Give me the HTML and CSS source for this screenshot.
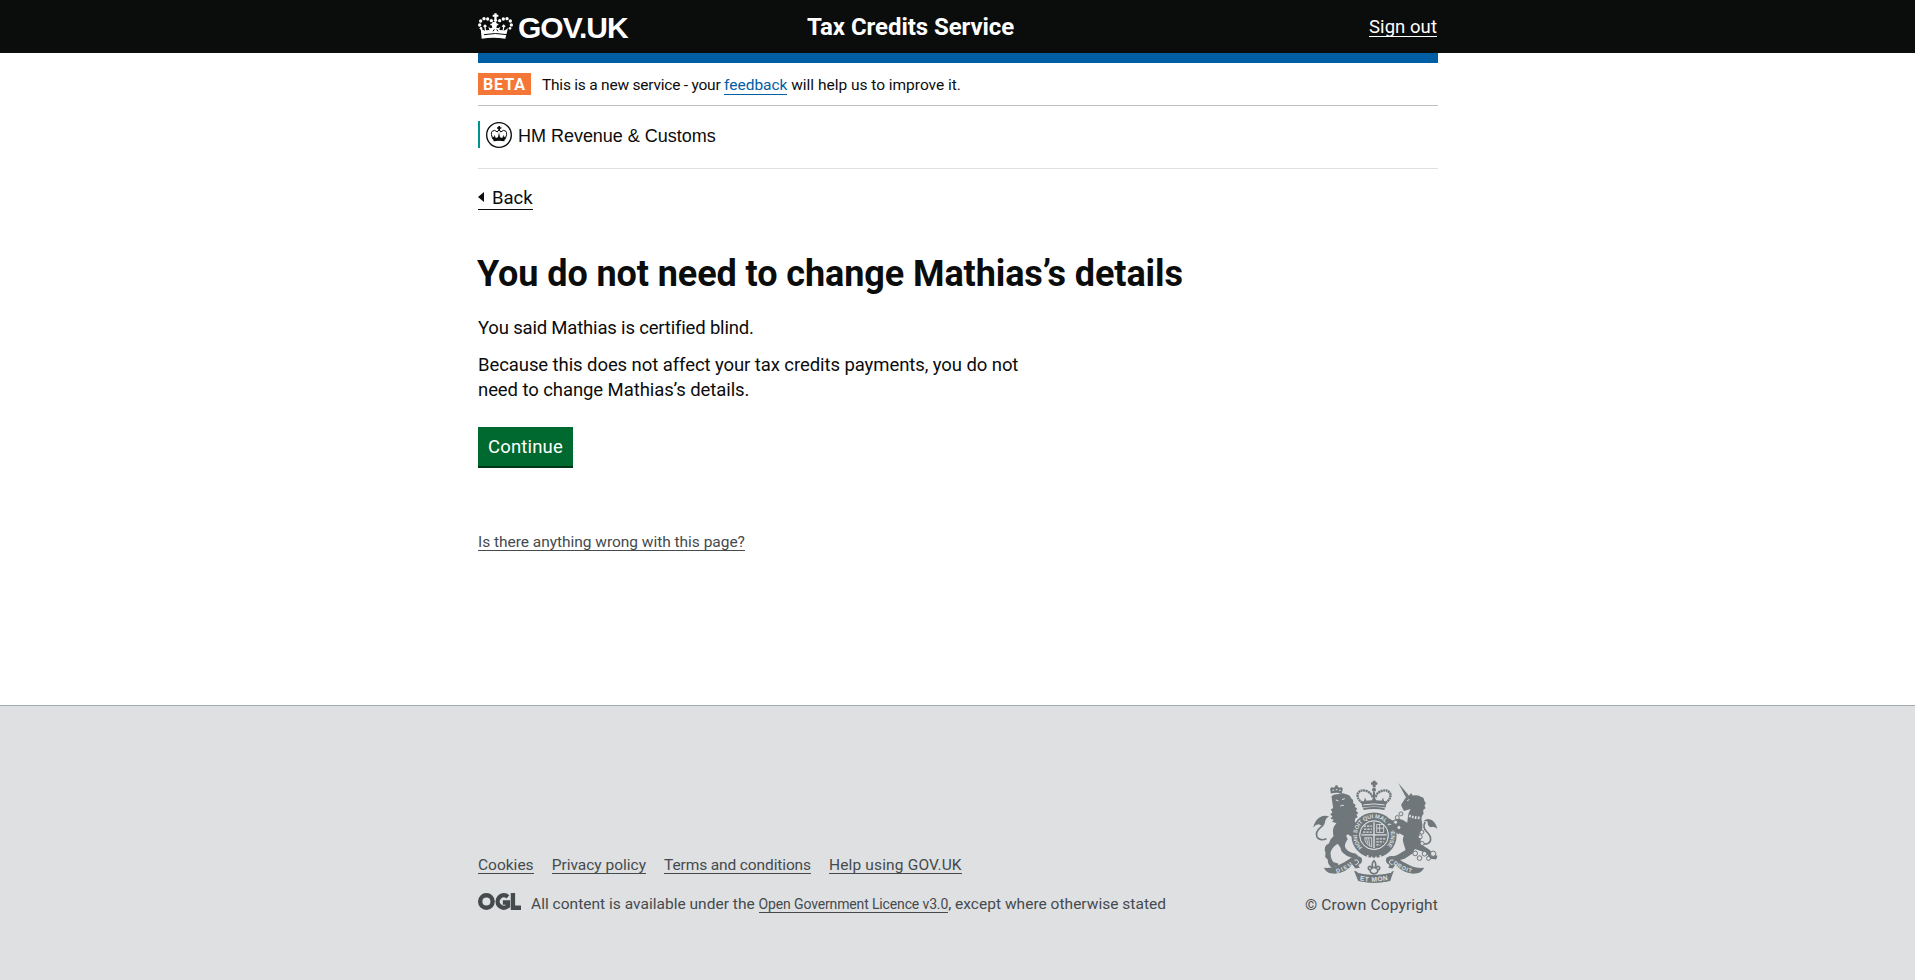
FILE: index.html
```
<!DOCTYPE html>
<html lang="en">
<head>
<meta charset="utf-8">
<title>You do not need to change Mathias’s details</title>
<link rel="stylesheet" href="styles.css">
</head>
<body>
<header class="header">
  <div class="wrap header-row">
    <a class="brand" href="#">
      <svg class="crown" viewBox="24 38 105 78" fill="#fff">
        <path d="M73 39h7v4h5v6h-5v7h-7v-7h-5v-6h5z"/>
        <circle cx="76.500" cy="60" r="5"/>
        <circle cx="64" cy="61" r="5"/><circle cx="53" cy="56" r="5"/><circle cx="42" cy="55" r="5"/><circle cx="32" cy="62" r="5"/><circle cx="29" cy="74" r="5"/><circle cx="33" cy="84" r="4"/>
        <circle cx="89" cy="61" r="5"/><circle cx="100" cy="56" r="5"/><circle cx="111" cy="55" r="5"/><circle cx="121" cy="62" r="5"/><circle cx="124" cy="74" r="5"/><circle cx="120" cy="84" r="4"/>
        <path d="M32 83q6 7 13 8l-2-10-4-3 6-6 6 6-4 3 1 9 10-1-3-10 6 5 6-2-2-7h-4v-5h4l3-5h10l3 5h4v5h-4l-2 7 6 2 6-5-3 10 10 1 1-9-4-3 6-6 6 6-4 3-2 10q7-1 13-8l-8 32q-36-6-71 0z"/>
        <path d="M42 103q34-7 69 0" fill="none" stroke="#0b0c0c" stroke-width="3"/>
        <path d="M69 93l4-6M84 93l-4-6" stroke="#0b0c0c" stroke-width="3"/>
      </svg>
      <span class="brand-name">GOV.UK</span>
    </a>
    <span class="service">Tax Credits Service</span>
    <a class="signout" href="#">Sign out</a>
  </div>
</header>
<div class="wrap blue-bar"></div>
<div class="wrap phase">
  <strong class="tag">BETA</strong>
  <span class="phase-text"><span class="phase-lead">This is a new service - your </span><a href="#">feedback</a> will help us to improve it.</span>
</div>
<div class="wrap org">
  <div class="org-logo">
    <svg class="org-crest" viewBox="48 66 78 78" fill="#0b0c0c">
      <circle cx="87" cy="105" r="37" fill="none" stroke="#0b0c0c" stroke-width="4"/>
      <path d="M85 78h5v4h4v4h-4v6h-5v-6h-4v-4h4z"/>
      <path d="M69 118q-8-17-3-24 8-7 16 2 1-5 5-5t5 5q8-9 16-2 5 7-3 24" fill="none" stroke="#0b0c0c" stroke-width="3"/>
      <path d="M67 108l5 4 2-8 3 10 7-2 3-15 3 15 7 2 3-10 2 8 5-4-4 16q-16-3-32 0z"/>
    </svg>
    <span class="org-name">HM Revenue &amp; Customs</span>
  </div>
</div>
<main class="wrap main">
  <a class="back" href="#"><svg class="back-arrow" viewBox="0 0 6 10"><path d="M6 0v10L0 5z" fill="#0b0c0c"/></svg><span class="back-text">Back</span></a>
  <h1 class="title">You do not need to change Mathias’s details</h1>
  <p class="text text-tight">You said Mathias is certified blind.</p>
  <p class="text">Because this does not affect your tax credits payments, you do not<br>need to change Mathias’s details.</p>
  <button class="button">Continue</button>
  <div><a class="report" href="#">Is there anything wrong with this page?</a></div>
</main>
<footer class="footer">
  <div class="wrap footer-row">
    <div>
      <nav class="footer-links">
        <a href="#">Cookies</a><a href="#">Privacy policy</a><a class="link-tight" href="#">Terms and conditions</a><a class="link-wide" href="#">Help using GOV.UK</a>
      </nav>
      <div class="licence">
        <svg class="ogl" viewBox="0 0 128 50" fill="none" stroke="#454a4d" stroke-width="13"><circle cx="25" cy="25" r="18.500"/><path d="M89 11A18.500 18.500 0 1 0 89 39V28H74M104 0V43.500H128"/></svg>
        <span class="licence-text">All content is available under the <a href="#">Open Government Licence v3.0</a>, except where otherwise stated</span>
      </div>
    </div>
    <div class="copyright">
      <svg class="arms" viewBox="69 45 375 310" fill="#6f777b">
        <g>
          <path d="M248 47h9v5h5v7h-5v8h-9v-8h-5v-7h5z"/><circle cx="252" cy="74" r="6"/>
          <path d="M217 114q-18-14-14-28 8-14 26-8 14 5 18 17h10q4-12 18-17 18-6 26 8 4 14-14 28" fill="none" stroke="#6f777b" stroke-width="7" stroke-dasharray="6 1.500"/>
          <path d="M249 80h6v22h-6zM220 114l5-16 6 15zM273 113l6-15 5 16zM242 112l10-18 10 18z"/>
          <path d="M214 110q38-8 76 0l-3 18q-35-7-70 0z"/>
          <path d="M220 120q32-6 64 0" fill="none" stroke="#dee0e2" stroke-width="3"/>
          <path d="M220 129q32-6 64 0v6q-32-6-64 0z"/>
        </g>
        <path d="M122 86l-2-15q4-7 10-3l5-3 1-4h6l1 4 5 3q7-4 10 3l-3 15q-16-5-33 0z"/>
        <path d="M127 76h5M137 74h5M147 76h5" fill="none" stroke="#dee0e2" stroke-width="3"/>
        <path d="M124 94q8-8 18-6 14-6 26 0 12 2 15 12 8 4 6 14l8 6-3 5 8 7-5 4 8 9-6 4 4 8-7 3q-6 16 8 24l-7 4 6 7-10 2q-14 4-25 16l5 10q-14 18-5 30 10 12 28 13l9 8-10 8-12-4q-30-9-32-29l-8-12q-20 12-22 29 0 14 8 26l15 4 1 7-20 6q-13-9-12-24l-8-8 1-13q-8-20 10-28 3-14 14-22-6-25 9-39l-13-4 5-6-10-3 6-8-7-5 7-7-5-8 7-5z"/>
        <path d="M170 190q17-2 26 10l12-2-3 12 4 10-14-3q-16-2-24-12z"/>
        <path d="M150 124q5-5 11-2M137 105l8 3M156 104l8-3" stroke="#dee0e2" stroke-width="3" fill="none"/>
        <path d="M109 222q-22 8-29-7-5-14 12-28 13-10 8-23" fill="none" stroke="#6f777b" stroke-width="5"/>
        <path d="M69 188q5-22 20-31 14-7 28-2-10 4-12 15-7 17-19 8-9 0-17 10z"/>
        <circle cx="252" cy="211" r="56" fill="none" stroke="#6f777b" stroke-width="24"/>
        <circle cx="252" cy="211" r="42"/>
        <circle cx="252" cy="211" r="43" fill="none" stroke="#dee0e2" stroke-width="2.500"/>
        <path id="garter" d="M217 248A51 51 0 1 1 287 248" fill="none"/>
        <text class="motto garter-text"><textPath href="#garter" textLength="236">HONI SOIT QUI MAL Y PENSE</textPath></text>
        <path d="M252 172v78M214 210h76" stroke="#dee0e2" stroke-width="4"/>
        <path d="M221 184h25M222 193h24M219 202h26M259 222h27M259 231h22M259 240h12" stroke="#dee0e2" stroke-width="4" stroke-dasharray="7 3"/>
        <path d="M260 179h21v24h-21zM269 179v22M260 190h21M224 219q0 20 21 27v-27zM229 219l5 18M236 219l3 24" stroke="#dee0e2" stroke-width="2.500" fill="none"/>
        <circle cx="233" cy="274" r="3" fill="#dee0e2"/><circle cx="245" cy="278" r="3" fill="#dee0e2"/><circle cx="258" cy="278" r="3" fill="#dee0e2"/><circle cx="271" cy="274" r="3" fill="#dee0e2"/>
        <path d="M325 54l32 38-9 5z"/>
        <path d="M334 122q-1-5 4-9l8-13q3-6 12-8l6-8 4 8q18-4 26 4 9 1 9 11l5 8-4 6 3 9-7 5 1 12q-9 8-5 23 6 23-8 39 8 12 3 28l28 18 12 14 12 4-4 11-17-2-14-18-33-11-7 13-24 16-23 6-16 10-8-7 8-14 17-6 25-15-5-17q-6-16 0-26l-25-14-14-22-13-3-4-9 12-3 10 5 16-6q16 2 28 13l3-27 7-15-20 6z"/>
        <path d="M352 107l6-3" stroke="#dee0e2" stroke-width="3" fill="none"/>
        <path d="M342 144q21 15 49 15" stroke="#dee0e2" stroke-width="8" stroke-dasharray="5 4" fill="none"/>
        <path d="M311 176l-9 10-11-3 3 12 17 2 15 12 8-13z"/>
        <path d="M390 235q28 8 32-8 3-13-12-27-13-13-4-29" fill="none" stroke="#6f777b" stroke-width="5"/>
        <path d="M400 171q6-10 19-8 17 4 24 29-11-9-21-5-10-5-8-15-5-6-14-1z"/>
        <g fill="#dee0e2" stroke="#6f777b" stroke-width="3"><circle cx="333" cy="147" r="6"/><circle cx="322" cy="158" r="6"/><circle cx="317" cy="172" r="6"/><circle cx="327" cy="188" r="6"/><circle cx="396" cy="202" r="6"/><circle cx="391" cy="216" r="6"/><circle cx="397" cy="236" r="6"/><circle cx="376" cy="266" r="7"/><circle cx="389" cy="280" r="7"/><circle cx="404" cy="267" r="7"/><circle cx="416" cy="281" r="6"/><circle cx="430" cy="267" r="8"/></g>
        <path d="M101 309q20 2 36-4 26-10 50-28 16-8 28 3 5 15-10 21l4 8-13 2-9-12q-19 25-53 28l-12-1q-14-3-21-17zM403 309q-20 2-36-4-26-10-50-28-16-8-28 3-5 15 10 21l-4 8 13 2 9-12q19 25 53 28l12-1q14-3 21-17z"/>
        <path d="M193 286q11-3 13 6-2 7-10 8M311 286q-11-3-13 6 2 7 10 8" fill="none" stroke="#dee0e2" stroke-width="3"/>
        <path d="M192 318q12 2 12 8 48 12 98 0 2-6 10-8-6 14-11 30-48 13-97 0z"/>
        <path d="M203 325q48 12 99 0l-2 24q-48 10-95 0z"/>
        <path d="M252 288q-9 9-3 21l-4 2q-5-11-10-3-1 7 6 7-3 9 11 13 14-4 11-13 7 0 6-7-5-8-10 3l-4-2q6-12-3-21z" fill="#dee0e2" stroke="#6f777b" stroke-width="5"/>
        <path id="dieu" d="M140 325Q168 317 191 297" fill="none"/><path id="droit" d="M309 297Q337 319 370 325" fill="none"/><path id="mon" d="M209 347Q252 356 297 345" fill="none"/>
        <text class="motto"><textPath href="#dieu" textLength="54">DIEU</textPath></text>
        <text class="motto"><textPath href="#droit" textLength="62">DROIT</textPath></text>
        <text class="motto mon-text"><textPath href="#mon" textLength="86">ET MON</textPath></text>
      </svg>
      <a class="link-wide" href="#">© Crown Copyright</a>
    </div>
  </div>
</footer>
</body>
</html>
```
FILE: styles.css
```
* { box-sizing: border-box; }
body { margin: 0; background: #fff; color: #0b0c0c; font-family: Roboto, "Liberation Sans", sans-serif; font-size: 18.5px; line-height: 25px; }
a { color: inherit; text-decoration: none; }
svg { display: block; flex: none; }
.wrap { width: 960px; margin: 0 auto; position: relative; left: 0.5px; }
.header { height: 53px; background: #0b0c0c; color: #fff; }
.header-row { height: 53px; display: grid; grid-template-columns: 330px 1fr auto; align-items: start; }
.brand { display: flex; }
.crown { width: 35px; height: 26px; margin-top: 13px; }
.brand-name { margin: 12px 0 0 5px; font: bold 30px/32px "Liberation Sans", sans-serif; letter-spacing: -1px; }
.service { margin: 12px 0 0 -1px; font-size: 24px; line-height: 30px; font-weight: 700; letter-spacing: -0.06px; }
.signout { margin: 16px 1px 0 0; height: 21px; line-height: 22px; letter-spacing: 0.06px; border-bottom: 1px solid #fff; }
.blue-bar { height: 10px; background: #005ea5; }
.phase { height: 43px; border-bottom: 1px solid #bfc1c3; display: flex; padding-top: 10px; font-size: 15.5px; line-height: 24px; letter-spacing: -0.02px; }
.phase-lead { letter-spacing: -0.22px; }
.tag { width: 53px; height: 22px; margin-right: 11px; background: #f47738; color: #fff; text-align: center; font-size: 16px; line-height: 23px; letter-spacing: 1px; }
.phase a { color: #005ea5; border-bottom: 1px solid #005ea5; line-height: 18px; }
.org { height: 63px; padding-top: 15px; border-bottom: 1px solid #dee0e2; }
.org-logo { height: 27px; display: flex; border-left: 2px solid #009390; padding: 1px 0 0 6px; }
.org-crest { width: 26px; height: 26px; }
.org-name { margin-left: 6px; font: 18px/28px "Liberation Sans", sans-serif; letter-spacing: -0.02px; }
.main { height: 536px; padding-top: 16px; }
.back { display: flex; width: 55px; align-items: center; height: 25px; border-bottom: 1px solid #0b0c0c; }
.back-arrow { width: 6px; height: 10px; margin-right: 8px; }
.back-text { padding-top: 2px; }
.title { margin: 44px 0 22px -1px; font-size: 36px; line-height: 40px; font-weight: 700; letter-spacing: -0.09px; white-space: nowrap; }
.text { margin: 0 0 12px; white-space: nowrap; letter-spacing: -0.08px; }
.text-tight { letter-spacing: -0.18px; }
.button { display: block; margin-top: 24px; height: 41px; width: 95px; padding: 2px 0 0; border: 0; border-bottom: 2px solid #003618; background: #00692f; color: #fff; font: inherit; letter-spacing: 0.17px; }
.report { display: inline-block; margin-top: 66px; height: 17px; line-height: 17px; font-size: 15.5px; letter-spacing: -0.03px; color: #454a4d; border-bottom: 1px solid #454a4d; }
.footer { height: 275px; border-top: 1px solid #a1acb2; background: #dee0e2; color: #454a4d; font-size: 15.5px; }
.footer-row { display: flex; justify-content: space-between; padding-top: 74px; }
.footer-links { display: flex; gap: 18px; margin-top: 75px; }
.footer-links a { height: 19px; line-height: 20px; border-bottom: 1px solid #454a4d; }
.link-tight { letter-spacing: -0.12px; }
.link-wide { letter-spacing: 0.16px; }
.licence { display: flex; margin-top: 18px; }
.ogl { width: 43px; height: 17px; margin: 1px 10px 0 0; }
.licence-text { line-height: 24px; white-space: nowrap; letter-spacing: 0.02px; }
.licence-text a { font-size: 14px; letter-spacing: -0.14px; border-bottom: 1px solid #454a4d; line-height: 18px; }
.copyright { width: 133px; text-align: right; white-space: nowrap; }
.arms { width: 125px; height: 103px; margin: 0 0 10px 8px; }
.motto { font: bold 17px "Liberation Sans", sans-serif; fill: #dee0e2; }
.garter-text { font-size: 17px; }
.mon-text { font-size: 20px; }
```
